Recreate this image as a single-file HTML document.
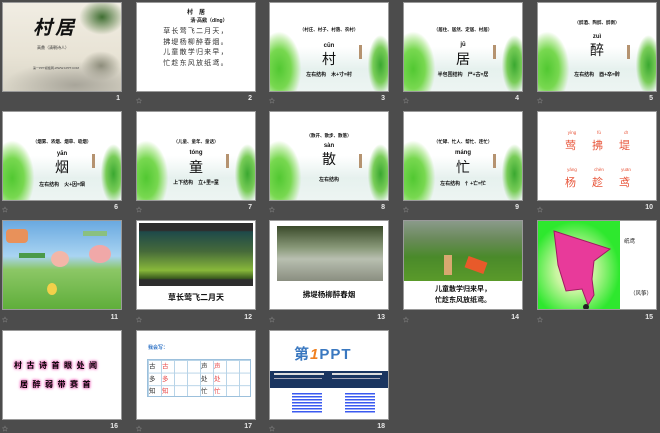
<!DOCTYPE html>
<html><head><meta charset="utf-8"><style>
*{margin:0;padding:0;box-sizing:border-box}
body{width:660px;height:433px;background:#4c4c4c;position:relative;overflow:hidden;font-family:"Liberation Sans","Noto Sans CJK SC",sans-serif}
.s{position:absolute;width:120px;height:90px;background:#fff;overflow:hidden;border:1px solid #9a9a9a}
.n{position:absolute;color:#e8e8e8;font-size:7px;font-weight:bold;width:30px;text-align:right}
.st{position:absolute;color:#aaa;font-size:6px}
.c{position:absolute;left:0;width:100%;text-align:center;color:#111}
.w{background:linear-gradient(180deg,#fff 0%,#fff 50%,#e6f1ee 75%,#edf5f2 100%)}
.wl{position:absolute;left:-14px;top:22px;width:58px;height:80px;background:radial-gradient(ellipse 45% 55% at 40% 55%,#52c832 0%,#78d850 45%,rgba(150,225,110,0.5) 70%,rgba(150,225,110,0) 85%)}
.wr{position:absolute;right:-6px;top:30px;width:30px;height:64px;background:radial-gradient(ellipse 50% 55% at 55% 50%,#3aa830 0%,#78cc58 50%,rgba(150,220,120,0) 85%)}
.tr{position:absolute;right:26px;top:42px;width:3px;height:14px;background:#b59370}
</style></head><body>

<!-- row 1 -->
<div class="s" style="left:2px;top:2px;background:linear-gradient(180deg,#f1ede3 0%,#e8e3d5 60%,#d8d4c6 100%)">
 <div style="position:absolute;right:-4px;top:-4px;width:46px;height:36px;background:radial-gradient(ellipse,#3f6e32 0%,rgba(80,120,60,0.4) 45%,rgba(80,120,60,0) 70%)"></div>
 <div style="position:absolute;right:0;top:48px;width:40px;height:30px;background:radial-gradient(ellipse,#8a8a78 0%,rgba(150,150,130,0) 70%)"></div>
 <div style="position:absolute;left:0;bottom:0;width:120px;height:30px;background:radial-gradient(ellipse at 60% 80%,#a8a59a 0%,rgba(190,185,170,0) 70%)"></div>
 <div style="position:absolute;left:30px;top:10px;font-size:19px;font-weight:bold;font-style:italic;color:#111;letter-spacing:3px">村居</div>
 <div style="position:absolute;left:34px;top:42px;font-size:4px;color:#333">高鼎（清朝诗人）</div>
 <div style="position:absolute;left:30px;top:63px;font-size:3px;color:#444">第一PPT模板网-WWW.1PPT.COM</div>
</div>
<div class="n" style="left:90px;top:95px">1</div>

<div class="s" style="left:136px;top:2px">
 <div class="c" style="top:4px;font-size:6px;font-weight:bold">村　居</div>
 <div class="c" style="top:14px;font-size:5px;font-weight:bold;padding-left:26px">清·高鼎（dǐng）</div>
 <div class="c" style="top:24px;font-size:7px;line-height:10.5px;color:#333;letter-spacing:1.2px">草长莺飞二月天，<br>拂堤杨柳醉春烟。<br>儿童散学归来早，<br>忙趁东风放纸鸢。</div>
</div>
<div class="st" style="left:136px;top:96px">☆</div><div class="n" style="left:222px;top:95px">2</div>

<div class="s w" style="left:269px;top:2px"><div class="wl"></div><div class="wr"></div><div class="tr"></div>
 <div class="c" style="top:24px;font-size:4.5px;font-weight:bold">（村庄、村子、村落、农村）</div>
 <div class="c" style="top:40px;font-size:6px;font-weight:bold">cūn</div>
 <div class="c" style="top:46px;font-size:14px">村</div>
 <div class="c" style="top:68px;font-size:5px;font-weight:bold">左右结构　木+寸=村</div></div>
<div class="st" style="left:269px;top:96px">☆</div><div class="n" style="left:355px;top:95px">3</div>

<div class="s w" style="left:403px;top:2px"><div class="wl"></div><div class="wr"></div><div class="tr"></div>
 <div class="c" style="top:24px;font-size:4.5px;font-weight:bold">（居住、居然、定居、村居）</div>
 <div class="c" style="top:39px;font-size:6px;font-weight:bold">jū</div>
 <div class="c" style="top:46px;font-size:14px">居</div>
 <div class="c" style="top:68px;font-size:5px;font-weight:bold">半包围结构　尸+古=居</div></div>
<div class="st" style="left:403px;top:96px">☆</div><div class="n" style="left:489px;top:95px">4</div>

<div class="s w" style="left:537px;top:2px"><div class="wl"></div><div class="wr"></div><div class="tr"></div>
 <div class="c" style="top:17px;font-size:4.5px;font-weight:bold">（醉酒、陶醉、醉倒）</div>
 <div class="c" style="top:31px;font-size:6px;font-weight:bold">zuì</div>
 <div class="c" style="top:37px;font-size:14px">醉</div>
 <div class="c" style="top:68px;font-size:5px;font-weight:bold">左右结构　酉+卒=醉</div></div>
<div class="st" style="left:537px;top:96px">☆</div><div class="n" style="left:623px;top:95px">5</div>

<!-- row 2 -->
<div class="s w" style="left:2px;top:111px"><div class="wl"></div><div class="wr"></div><div class="tr"></div>
 <div class="c" style="top:27px;font-size:4.5px;font-weight:bold">（烟雾、浓烟、烟草、吸烟）</div>
 <div class="c" style="top:39px;font-size:6px;font-weight:bold">yān</div>
 <div class="c" style="top:45px;font-size:14px">烟</div>
 <div class="c" style="top:69px;font-size:5px;font-weight:bold">左右结构　火+因=烟</div></div>
<div class="st" style="left:2px;top:205px">☆</div><div class="n" style="left:88px;top:204px">6</div>

<div class="s w" style="left:136px;top:111px"><div class="wl"></div><div class="wr"></div><div class="tr"></div>
 <div class="c" style="top:27px;font-size:4.5px;font-weight:bold">（儿童、童年、童话）</div>
 <div class="c" style="top:38px;font-size:6px;font-weight:bold">tóng</div>
 <div class="c" style="top:45px;font-size:14px">童</div>
 <div class="c" style="top:67px;font-size:5px;font-weight:bold">上下结构　立+里=童</div></div>
<div class="st" style="left:136px;top:205px">☆</div><div class="n" style="left:222px;top:204px">7</div>

<div class="s w" style="left:269px;top:111px"><div class="wl"></div><div class="wr"></div><div class="tr"></div>
 <div class="c" style="top:21px;font-size:4.5px;font-weight:bold">（散开、散步、散落）</div>
 <div class="c" style="top:31px;font-size:6px;font-weight:bold">sàn</div>
 <div class="c" style="top:37px;font-size:14px">散</div>
 <div class="c" style="top:64px;font-size:5px;font-weight:bold">左右结构</div></div>
<div class="st" style="left:269px;top:205px">☆</div><div class="n" style="left:355px;top:204px">8</div>

<div class="s w" style="left:403px;top:111px"><div class="wl"></div><div class="wr"></div><div class="tr"></div>
 <div class="c" style="top:27px;font-size:4.5px;font-weight:bold">（忙碌、忙人、帮忙、连忙）</div>
 <div class="c" style="top:38px;font-size:6px;font-weight:bold">máng</div>
 <div class="c" style="top:45px;font-size:14px">忙</div>
 <div class="c" style="top:68px;font-size:5px;font-weight:bold">左右结构　忄+亡=忙</div></div>
<div class="st" style="left:403px;top:205px">☆</div><div class="n" style="left:489px;top:204px">9</div>

<div class="s" style="left:537px;top:111px;color:#e8553a">
 <div style="position:absolute;left:26px;top:18px;font-size:4.5px;width:16px;text-align:center">yìng</div>
 <div style="position:absolute;left:53px;top:18px;font-size:4.5px;width:16px;text-align:center">fú</div>
 <div style="position:absolute;left:80px;top:18px;font-size:4.5px;width:16px;text-align:center">dī</div>
 <div style="position:absolute;left:27px;top:25px;font-size:11px">莺</div>
 <div style="position:absolute;left:54px;top:25px;font-size:11px">拂</div>
 <div style="position:absolute;left:81px;top:25px;font-size:11px">堤</div>
 <div style="position:absolute;left:25px;top:55px;font-size:4.5px;width:18px;text-align:center">yáng</div>
 <div style="position:absolute;left:51px;top:55px;font-size:4.5px;width:20px;text-align:center">chèn</div>
 <div style="position:absolute;left:78px;top:55px;font-size:4.5px;width:20px;text-align:center">yuān</div>
 <div style="position:absolute;left:27px;top:62px;font-size:11px">杨</div>
 <div style="position:absolute;left:54px;top:62px;font-size:11px">趁</div>
 <div style="position:absolute;left:81px;top:62px;font-size:11px">鸢</div>
</div>
<div class="st" style="left:537px;top:205px">☆</div><div class="n" style="left:623px;top:204px">10</div>

<!-- row 3 -->
<div class="s" style="left:2px;top:220px;background:linear-gradient(180deg,#6aa9e0 0%,#a9d4f2 40%,#8cc766 55%,#5fae3a 100%)">
 <div style="position:absolute;left:3px;top:8px;width:22px;height:14px;background:#e8915a;border-radius:4px"></div>
 <div style="position:absolute;left:48px;top:30px;width:18px;height:16px;background:#f3b6a8;border-radius:50%"></div>
 <div style="position:absolute;left:86px;top:24px;width:22px;height:18px;background:#f0a8a8;border-radius:50%"></div>
 <div style="position:absolute;left:80px;top:10px;width:24px;height:5px;background:#8ac080"></div>
 <div style="position:absolute;left:16px;top:32px;width:26px;height:5px;background:#4a9a4a"></div>
 <div style="position:absolute;left:44px;top:62px;width:10px;height:12px;background:#f2d04a;border-radius:50%"></div>
</div>
<div class="st" style="left:2px;top:315px">☆</div><div class="n" style="left:88px;top:314px">11</div>

<div class="s" style="left:136px;top:220px">
 <div style="position:absolute;left:2px;top:2px;width:114px;height:63px;background:linear-gradient(180deg,#2e2e2e 0%,#2e2e2e 12%,#1e4a4a 14%,#466a3a 45%,#88b83a 75%,#3a5a1e 88%,#2e2e2e 90%)"></div>
 <div class="c" style="top:71px;font-size:8px;font-weight:bold">草长莺飞二月天</div>
</div>
<div class="st" style="left:136px;top:315px">☆</div><div class="n" style="left:222px;top:314px">12</div>

<div class="s" style="left:269px;top:220px">
 <div style="position:absolute;left:7px;top:5px;width:106px;height:55px;background:linear-gradient(180deg,#3a4a2a 0%,#8a9a7a 40%,#b8bfb0 60%,#8a8e80 100%)"></div>
 <div class="c" style="top:68px;font-size:7.5px;font-weight:bold">拂堤杨柳醉春烟</div>
</div>
<div class="st" style="left:269px;top:315px">☆</div><div class="n" style="left:355px;top:314px">13</div>

<div class="s" style="left:403px;top:220px">
 <div style="position:absolute;left:0;top:0;width:120px;height:60px;background:linear-gradient(180deg,#8a9a8a 0%,#6a8a5a 30%,#4a8a2a 60%,#5a9a2a 100%)"></div>
 <div style="position:absolute;left:62px;top:38px;width:20px;height:12px;background:#e85a2a;transform:rotate(20deg)"></div>
 <div style="position:absolute;left:40px;top:34px;width:8px;height:20px;background:#d8a870"></div>
 <div class="c" style="top:63px;font-size:7px;font-weight:bold;line-height:11px">儿童散学归来早，<br>忙趁东风放纸鸢。</div>
</div>
<div class="st" style="left:403px;top:315px">☆</div><div class="n" style="left:489px;top:314px">14</div>

<div class="s" style="left:537px;top:220px">
 <div style="position:absolute;left:0;top:0;width:82px;height:90px;background:radial-gradient(ellipse at 45% 55%,#fff8d0 0%,#c8f5a0 30%,#2ee82e 70%)"></div>
 <svg style="position:absolute;left:10px;top:4px" width="70" height="84" viewBox="0 0 70 84"><polygon points="6,6 62,24 46,36 44,54 46,70 40,80 34,64 18,66 10,40" fill="#e83a9a" stroke="#a01a60" stroke-width="1"/><circle cx="38" cy="82" r="3" fill="#222"/></svg>
 <div style="position:absolute;left:86px;top:16px;font-size:5.5px;color:#222">纸鸢</div>
 <div style="position:absolute;left:92px;top:68px;font-size:5.5px;color:#222">（风筝）</div>
</div>
<div class="st" style="left:537px;top:315px">☆</div><div class="n" style="left:623px;top:314px">15</div>

<!-- row 4 -->
<div class="s" style="left:2px;top:330px">
 <div style="position:absolute;left:11px;top:29px;font-size:8px;font-weight:bold;letter-spacing:4.5px;text-shadow:0 0 3px #f070c0,0 0 3px #f070c0,0 0 2px #f070c0">村古诗首眼处闻</div>
 <div style="position:absolute;left:17px;top:48px;font-size:8px;font-weight:bold;letter-spacing:4.5px;text-shadow:0 0 3px #f070c0,0 0 3px #f070c0,0 0 2px #f070c0">居醉弱带赛首</div>
</div>
<div class="st" style="left:2px;top:424px">☆</div><div class="n" style="left:88px;top:423px">16</div>

<div class="s" style="left:136px;top:330px">
 <div style="position:absolute;left:11px;top:13px;font-size:5px;color:#3a7ac8;font-weight:bold">我会写：</div>
 <div style="position:absolute;left:10px;top:28px;width:104px;height:38px;background-image:linear-gradient(90deg,#b8d4e8 1px,transparent 1px),linear-gradient(180deg,#b8d4e8 1px,transparent 1px);background-size:13px 12.6px;border:1px solid #9cc0dc"></div>
 <div style="position:absolute;left:12px;top:30px;font-size:6.5px;line-height:12.6px;color:#333">古<br>多<br>知</div>
 <div style="position:absolute;left:25px;top:30px;font-size:6.5px;line-height:12.6px;color:#e84a4a">古<br>多<br>知</div>
 <div style="position:absolute;left:64px;top:30px;font-size:6.5px;line-height:12.6px;color:#333">声<br>处<br>忙</div>
 <div style="position:absolute;left:77px;top:30px;font-size:6.5px;line-height:12.6px;color:#e84a4a">声<br>处<br>忙</div>
</div>
<div class="st" style="left:136px;top:424px">☆</div><div class="n" style="left:222px;top:423px">17</div>

<div class="s" style="left:269px;top:330px">
 <div style="position:absolute;left:24px;top:12px;font-size:15px;font-weight:bold;color:#3a78c0;letter-spacing:1px">第<span style="color:#f08020;font-style:italic">1</span>PPT</div>
 <div style="position:absolute;left:0;top:40px;width:120px;height:17px;background:#1a3560"></div>
 <div style="position:absolute;left:4px;top:42px;width:50px;height:1.5px;background:#ddd"></div>
 <div style="position:absolute;left:62px;top:42px;width:50px;height:1.5px;background:#ddd"></div>
 <div style="position:absolute;left:4px;top:47px;width:48px;height:1px;background:#aab"></div>
 <div style="position:absolute;left:62px;top:47px;width:48px;height:1px;background:#aab"></div>
 <div style="position:absolute;left:22px;top:62px;width:30px;height:20px;background:repeating-linear-gradient(180deg,#3a5af0 0 1.5px,transparent 1.5px 3px)"></div>
 <div style="position:absolute;left:75px;top:62px;width:30px;height:20px;background:repeating-linear-gradient(180deg,#3a5af0 0 1.5px,transparent 1.5px 3px)"></div>
</div>
<div class="st" style="left:269px;top:424px">☆</div><div class="n" style="left:355px;top:423px">18</div>
</body></html>
